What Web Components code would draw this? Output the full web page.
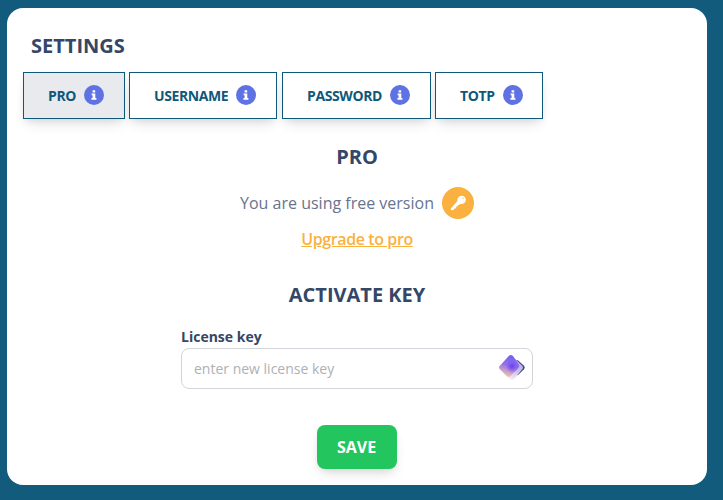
<!DOCTYPE html>
<html lang="en"><head><meta charset="utf-8"><title>Settings</title>
<style>
html,body{margin:0;height:100%}
body{background:#125b7c;font-family:"Open Sans",sans-serif;overflow:hidden;--lift:0 8px 14px -4px rgba(0,0,0,.12),0 3px 6px -1px rgba(0,0,0,.07)}
</style></head><body>
<settings-card>
  <settings-heading slot="title">SETTINGS</settings-heading>
  <settings-tab slot="tabs" active style="--w:102px">PRO</settings-tab>
  <settings-tab slot="tabs" style="--w:148px">USERNAME</settings-tab>
  <settings-tab slot="tabs" style="--w:149px;margin-left:1px">PASSWORD</settings-tab>
  <settings-tab slot="tabs" style="--w:108px">TOTP</settings-tab>
  <pro-status><settings-heading slot="heading">PRO</settings-heading>You are using free version<span slot="link">Upgrade to pro</span></pro-status>
  <license-form><settings-heading slot="heading">ACTIVATE KEY</settings-heading><span slot="label">License key</span><span slot="placeholder">enter new license key</span><save-button slot="action">SAVE</save-button></license-form>
</settings-card>
<script>
const define=(name,html)=>customElements.define(name,class extends HTMLElement{
  constructor(){super();this.attachShadow({mode:'open'}).innerHTML=html}
});
define('settings-card',`<style>
:host{display:block;box-sizing:border-box;width:700px;height:477px;margin:8px 0 0 7px;padding:24px 16px 0;background:#fff;border-radius:16px;float:left}
header{padding-left:8px}
nav{display:flex;gap:4px;margin-top:12px}
main{display:flex;flex-direction:column;align-items:center}
</style><header><slot name="title"></slot></header><nav><slot name="tabs"></slot></nav><main><slot></slot></main>`);
define('settings-heading',`<style>
:host{display:block;font-size:20px;line-height:28px;font-weight:700;color:#344767;white-space:nowrap}
</style><slot></slot>`);
define('info-icon',`<style>:host{display:block;width:20px;height:20px}svg{display:block}</style>
<svg width="20" height="20" viewBox="0 0 20 20"><circle cx="10" cy="10" r="10" fill="#5e72e4"/><path fill="#fff" d="M8.6 5.2h2.6v2.2H8.6zM7.6 8.5h3.7v4.5h1.1v1.7H7.4V13h1.2v-2.8h-1z"/></svg>`);
define('settings-tab',`<style>
:host{display:flex;box-sizing:border-box;width:var(--w);height:47px;padding:0 0 0 24px;border:1px solid #0f587a;background:#fff;align-items:center;gap:8px;color:#0f587a;font-size:14px;line-height:20px;font-weight:700;letter-spacing:-.4px;box-shadow:var(--lift)}
:host([active]){background:#e9eaed}
span{padding-top:1px}info-icon{margin-top:-1px}
</style><span><slot></slot></span><info-icon></info-icon>`);
define('pro-status',`<style>
:host{display:flex;flex-direction:column;align-items:center;padding-top:24px;font-size:16px;line-height:26px;color:#67748e}
.row{display:flex;align-items:center;gap:8px;margin-top:16px;height:32px;white-space:nowrap}
a{display:block;margin-top:7px;color:#fbb140;font-weight:600;letter-spacing:-.4px;text-decoration:underline}
svg{display:block}
</style><slot name="heading"></slot><div class="row"><span><slot></slot></span>
<svg width="32" height="32" viewBox="0 0 32 32"><circle cx="16" cy="16" r="16" fill="#fbb140"/><path fill="#fff" fill-rule="evenodd" d="M19.4 8.8a4.1 4.1 0 1 1-.9 8l-1.2.9-1.2.2-.3 1.3-1.4.4-.3 1.3-1.3.5-2 1.8-1.8-.3-.1-1.5 6.6-7.3a4.1 4.1 0 0 1 3.9-5.3zm1.6 1.6a.7.7 0 1 0 .1 1.4.7.7 0 0 0-.1-1.4z"/></svg></div>
<a><slot name="link"></slot></a>`);
define('gem-icon',`<style>:host{display:block;width:28px;height:28px}svg{display:block}</style>
<svg width="28" height="28" viewBox="0 0 28 28"><defs>
<linearGradient id="a" x1=".15" y1=".1" x2=".95" y2=".95" gradientTransform="rotate(45 .5 .5)"><stop stop-color="#8068f2"/><stop offset=".5" stop-color="#a083e3"/><stop offset="1" stop-color="#f5c2b3"/></linearGradient>
<linearGradient id="b" gradientUnits="userSpaceOnUse" x1="17" y1="4" x2="13" y2="26"><stop stop-color="#b5a2f3"/><stop offset=".55" stop-color="#cbbcf0"/><stop offset="1" stop-color="#fff0ea"/></linearGradient>
<linearGradient id="m" gradientUnits="userSpaceOnUse" x1="14" y1="2" x2="8" y2="23"><stop stop-color="#735ff6"/><stop offset=".45" stop-color="#9370e8"/><stop offset="1" stop-color="#fac9a9"/></linearGradient>
<radialGradient id="c"><stop stop-color="#6340ee"/><stop offset="1" stop-color="#8051ee" stop-opacity="0"/></radialGradient></defs>
<path fill="#344f78" d="M18 6.2q1.2-.6 2.2.3l5.8 5.3q1.6 1.7 0 3.4l-5.6 5.6q-1 .9-2.2.1z"/>
<path fill="url(#b)" d="M13.2 4.4q1.8-1.5 3.6 0l7.4 7.3q1.5 1.8 0 3.6L16 25.2q-1.8 1.7-3.6 0L6 19z"/>
<path fill="url(#m)" d="M11 1.7q1.9-1.6 3.8 0l6.1 9q.9 1.8-.5 3.2l-8.2 8.3q-1.7 1.4-3.4 0l-7-7q-1.6-1.7 0-3.4z"/>
<circle cx="14" cy="12.5" r="6.5" fill="url(#c)"/></svg>`);
define('license-form',`<style>
:host{display:flex;flex-direction:column;align-items:center;margin-top:29px}
label{align-self:stretch;margin-top:18px;font-size:14px;line-height:20px;font-weight:700;color:#344767}
.field{box-sizing:border-box;width:352px;height:41px;margin-top:1px;border:1px solid #d2d6da;border-radius:8px;background:#fff;display:flex;align-items:center;justify-content:space-between;padding:0 6px 0 12px;font-size:14px;color:#adb1b6}
.action{margin-top:36px}
gem-icon{margin-top:-2px}
</style><slot name="heading"></slot><label><slot name="label"></slot></label><div class="field"><slot name="placeholder"></slot><gem-icon></gem-icon></div><div class="action"><slot name="action"></slot></div>`);
define('save-button',`<style>
:host{display:flex;box-sizing:border-box;width:80px;height:44px;padding-right:1px;align-items:center;justify-content:center;border-radius:8px;background:#22c55e;color:#fff;font-size:16px;font-weight:700;box-shadow:var(--lift)}
</style><slot></slot>`);
</script></body></html>
